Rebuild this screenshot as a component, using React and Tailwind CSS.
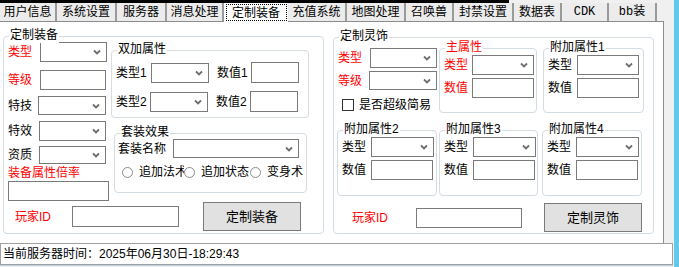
import React from "react";
import clsx from "clsx";

const tabs = [
  { label: "用户信息", w: "w-[57px]" },
  { label: "系统设置", w: "w-[60px]" },
  { label: "服务器", w: "w-[50px]" },
  { label: "消息处理", w: "w-[57px]" },
  { label: "定制装备", w: "w-[64px]", active: true },
  { label: "充值系统", w: "w-[59px]" },
  { label: "地图处理", w: "w-[59px]" },
  { label: "召唤兽", w: "w-[48px]" },
  { label: "封禁设置", w: "w-[60px]" },
  { label: "数据表", w: "w-[48px]" },
  { label: "CDK", w: "w-[47px]", mono: true },
  { label: "bb装", w: "w-[48px]", mono: true },
];

const Chevron = () => (
  <svg width="8" height="6" viewBox="0 0 8 6" className="shrink-0">
    <path d="M1 1.5L4 4.5L7 1.5" fill="none" stroke="#6e6e6e" strokeWidth="1.8" />
  </svg>
);

const Select = ({ className }) => (
  <div className={clsx("flex shrink-0 items-center justify-end border border-[#7a7a7a] bg-white pr-[5px]", className)}>
    <Chevron />
  </div>
);

const Input = ({ className }) => (
  <div className={clsx("shrink-0 border border-[#7a7a7a] bg-white", className)} />
);

const Label = ({ red, className, children }) => (
  <span className={clsx("shrink-0 whitespace-nowrap", red ? "text-[#ff0000]" : "text-black", className)}>
    {children}
  </span>
);

const Group = ({ title, red, className, children }) => (
  <div className={clsx("relative shrink-0 rounded-[4px] border border-[#d3dbe3]", className)}>
    <span
      className={clsx(
        "absolute -top-[9px] left-[5px] whitespace-nowrap bg-white px-[1px] leading-[15px]",
        red ? "text-[#ff0000]" : "text-black"
      )}
    >
      {title}
    </span>
    {children}
  </div>
);

const Button = ({ className, children }) => (
  <div className={clsx("flex shrink-0 items-center justify-center border border-[#7a7a7a] bg-[#e1e1e1] text-[13px]", className)}>
    {children}
  </div>
);

const Radio = ({ className, children }) => (
  <div className={clsx("flex shrink-0 items-center overflow-hidden", className)}>
    <span className="h-[11px] w-[11px] shrink-0 rounded-full border border-[#8a8a8a] bg-white" />
    <span className="ml-[6px] whitespace-nowrap">{children}</span>
  </div>
);

// small attribute box used in 定制灵饰
const AttrBox = ({ title, red, className, selectW, inputW, labelW }) => (
  <Group title={title} red={red} className={className}>
    <div className="flex flex-col pl-[4px] pt-[6px]">
      <div className="flex h-[20px] items-center">
        <Label red={red} className={labelW}>类型</Label>
        <Select className={clsx("h-[20px]", selectW)} />
      </div>
      <div className="mt-[3px] flex h-[20px] items-center">
        <Label red={red} className={labelW}>数值</Label>
        <Input className={clsx("h-[20px]", inputW)} />
      </div>
    </div>
  </Group>
);

export default function App() {
  return (
    <div className="flex h-[267px] w-[679px] overflow-hidden bg-[#f0f0f0] font-['Liberation_Sans','Noto_Sans_CJK_SC',sans-serif] text-[12px] leading-[16px] text-black">
      <div className="flex w-[674px] flex-col">
        <div className="h-[3px] w-[509px] bg-black" />

        {/* tabs */}
        <div className="flex h-[18px] items-start">
          {tabs.map((t) =>
            t.active ? (
              <div key={t.label} className={clsx("relative z-10 flex h-[19px] items-start justify-center bg-white pt-[1px]", t.w)}>
                <span className="flex h-[17px] w-[61px] items-center justify-center border border-dotted border-black">
                  {t.label}
                </span>
              </div>
            ) : (
              <div
                key={t.label}
                className={clsx(
                  "flex h-[18px] items-center justify-center border-r-2 border-[#9a9a9a] bg-[#ececec]",
                  t.mono && "font-['Liberation_Mono','Noto_Sans_CJK_SC',monospace]",
                  t.w
                )}
              >
                {t.label}
              </div>
            )
          )}
        </div>

        {/* panel */}
        <div className="flex h-[222px] w-[664px] items-start border-t border-r border-[#8c8c8c] bg-white">
          <Group title="定制装备" className="ml-[3px] mt-[14px] h-[198px] w-[321px]">
            <div className="flex">
              <div className="flex w-[105px] shrink-0 flex-col pl-[4px] pt-[5px]">
                <div className="flex h-[20px] items-center">
                  <Label red className="w-[32px]">类型</Label>
                  <Select className="h-[20px] w-[67px]" />
                </div>
                <div className="mt-[8px] flex h-[20px] items-center">
                  <Label red className="w-[32px]">等级</Label>
                  <Input className="h-[20px] w-[66px]" />
                </div>
                <div className="mt-[6px] flex h-[19px] items-center">
                  <Label className="w-[30px]">特技</Label>
                  <Select className="h-[19px] w-[68px]" />
                </div>
                <div className="mt-[6px] flex h-[20px] items-center">
                  <Label className="w-[31px]">特效</Label>
                  <Select className="h-[20px] w-[67px]" />
                </div>
                <div className="mt-[5px] flex h-[18px] items-center">
                  <Label className="w-[31px]">资质</Label>
                  <Select className="h-[18px] w-[67px]" />
                </div>
                <Label red className="mt-[1px] h-[16px]">装备属性倍率</Label>
                <Input className="h-[20px] w-[101px]" />
              </div>

              <div className="ml-[2px] flex flex-col">
                <Group title="双加属性" className="mt-[13px] h-[68px] w-[198px]">
                  <div className="flex flex-col pl-[4px] pt-[11px]">
                    <div className="flex h-[21px] items-center">
                      <Label className="w-[35px]">类型1</Label>
                      <Select className="h-[20px] w-[58px]" />
                      <Label className="ml-[8px] w-[34px]">数值1</Label>
                      <Input className="h-[21px] w-[48px]" />
                    </div>
                    <div className="mt-[8px] flex h-[21px] items-center">
                      <Label className="w-[34px]">类型2</Label>
                      <Select className="h-[20px] w-[58px]" />
                      <Label className="ml-[8px] w-[34px]">数值2</Label>
                      <Input className="h-[21px] w-[48px]" />
                    </div>
                  </div>
                </Group>

                <Group title="套装效果" className="ml-[3px] mt-[15px] h-[60px] w-[193px]">
                  <div className="flex flex-col pl-[3px] pt-[5px]">
                    <div className="flex h-[19px] items-center">
                      <Label className="w-[55px]">套装名称</Label>
                      <Select className="h-[19px] w-[126px]" />
                    </div>
                    <div className="ml-[4px] mt-[7px] flex h-[14px] items-center">
                      <Radio className="w-[62px]">追加法术</Radio>
                      <Radio className="w-[66px]">追加状态</Radio>
                      <Radio>变身术</Radio>
                    </div>
                  </div>
                </Group>
              </div>
            </div>

            <div className="mt-[1px] flex h-[29px] items-center pl-[11px]">
              <Label red className="w-[57px]">玩家ID</Label>
              <Input className="h-[21px] w-[107px]" />
              <Button className="ml-[24px] h-[29px] w-[98px]">定制装备</Button>
            </div>
          </Group>

          <Group title="定制灵饰" className="ml-[9px] mt-[15px] h-[197px] w-[321px]">
            <div className="flex items-start">
              <div className="flex w-[103px] shrink-0 flex-col pl-[4px] pt-[10px]">
                <div className="flex h-[20px] items-center">
                  <Label red className="w-[32px]">类型</Label>
                  <Select className="h-[20px] w-[67px]" />
                </div>
                <div className="mt-[3px] flex h-[19px] items-center">
                  <Label red className="w-[31px]">等级</Label>
                  <Select className="h-[19px] w-[68px]" />
                </div>
                <div className="mt-[8px] flex h-[14px] items-center pl-[4px]">
                  <span className="h-[12px] w-[12px] shrink-0 border border-[#333333] bg-white" />
                  <Label className="ml-[5px]">是否超级简易</Label>
                </div>
              </div>
              <AttrBox title="主属性" red className="ml-[2px] mt-[10px] h-[65px] w-[98px]" labelW="w-[28px]" selectW="w-[62px]" inputW="w-[62px]" />
              <AttrBox title="附加属性1" className="ml-[6px] mt-[10px] h-[65px] w-[101px]" labelW="w-[29px]" selectW="w-[62px]" inputW="w-[62px]" />
            </div>

            <div className="mt-[17px] flex">
              <AttrBox title="附加属性2" className="ml-[3px] h-[66px] w-[100px]" labelW="w-[29px]" selectW="w-[63px]" inputW="w-[62px]" />
              <AttrBox title="附加属性3" className="ml-[2px] h-[66px] w-[99px]" labelW="w-[29px]" selectW="w-[63px]" inputW="w-[62px]" />
              <AttrBox title="附加属性4" className="ml-[4px] h-[66px] w-[100px]" labelW="w-[29px]" selectW="w-[63px]" inputW="w-[62px]" />
            </div>

            <div className="mt-[7px] flex h-[29px] items-center pl-[18px]">
              <Label red className="w-[64px]">玩家ID</Label>
              <Input className="h-[20px] w-[106px]" />
              <Button className="ml-[22px] h-[29px] w-[98px]">定制灵饰</Button>
            </div>
          </Group>
        </div>

        {/* status bar */}
        <div className="flex h-[22px] w-[673px] items-center border border-[#a0a0a0] bg-white pl-[2px]">
          当前服务器时间：2025年06月30日-18:29:43
        </div>
        <div className="h-[1px] w-[673px] bg-[#b9cfe0]" />
      </div>
      <div className="w-[5px] bg-[#63c9ea]" />
    </div>
  );
}
